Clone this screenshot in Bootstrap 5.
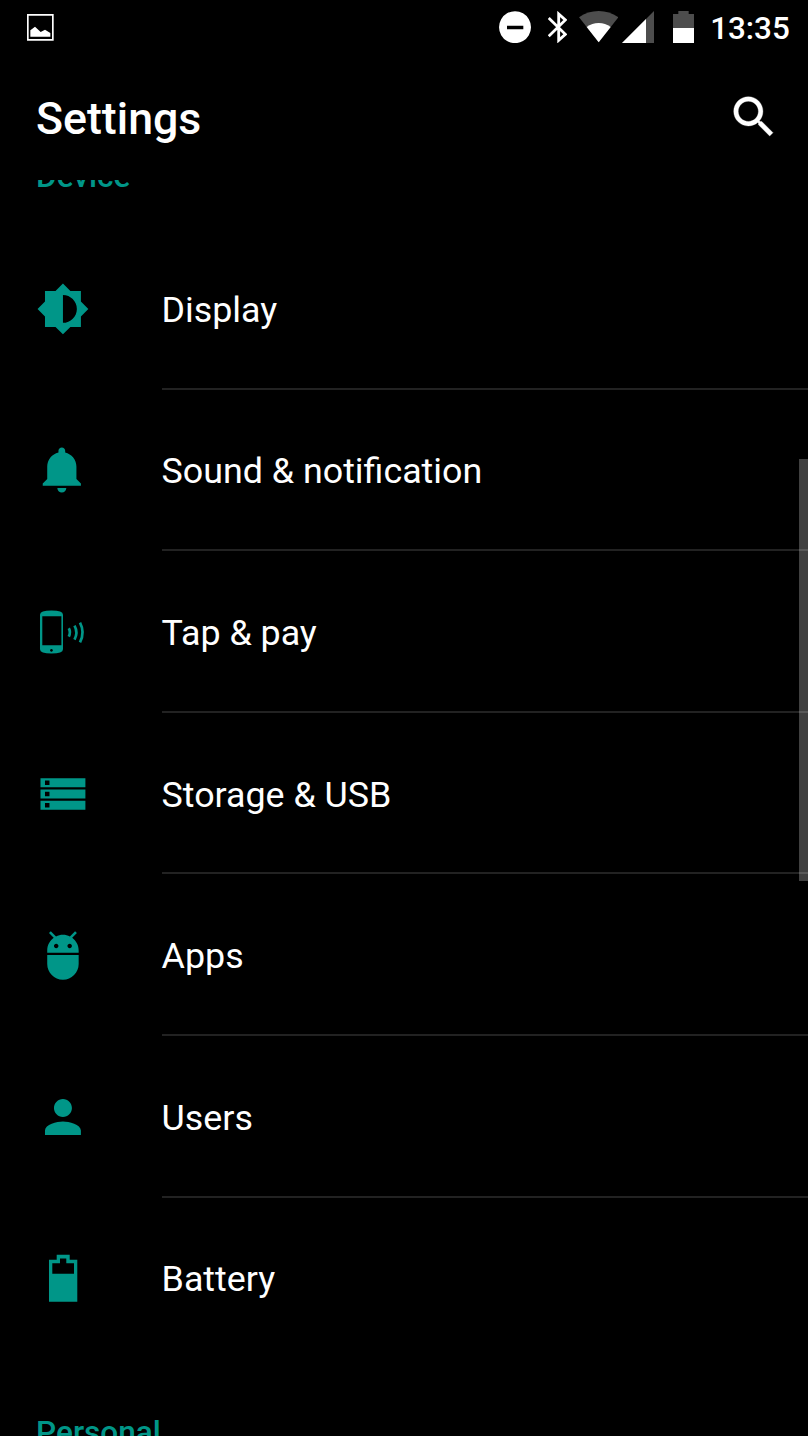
<!DOCTYPE html>
<html lang="en">
<head>
<meta charset="utf-8">
<meta name="viewport" content="width=device-width, initial-scale=1">
<title>Settings</title>
<link href="https://cdn.jsdelivr.net/npm/bootstrap@5.3.0/dist/css/bootstrap.min.css" rel="stylesheet">
<style>
  body { background: #000; color: #fff; font-family: Roboto, "Noto Sans", sans-serif; }
  svg { display: block; flex: none; }
  .screen { height: 1436px; width: 808px; }
  .status-bar { flex: none; height: 54px; padding: 0 18.2px 0 27px; }
  .icon-bluetooth { margin-left: 17px; }
  .icon-wifi { margin-left: 11.3px; }
  .icon-signal { margin-left: 3.7px; }
  .icon-battery { margin-left: 19.3px; }
  .clock { font-size: 31.4px; font-weight: 500; line-height: 54px; margin-left: 16.2px; padding-top: 3px; }
  .app-bar { flex: none; height: 125.6px; padding: 0 26.8px 0 36px; }
  .app-title { font-size: 44.7px; font-weight: 500; line-height: 54px; margin-top: 5px; }
  .section-title { color: #009688; font-size: 31.6px; font-weight: 500; line-height: 37px; padding-left: 36px; }
  .section-device { height: 70.4px; margin-top: -22px; }
  .section-personal { padding-top: 54.6px; }
  .setting { height: 161.6px; padding-left: 36px; }
  .setting svg { width: 53.9px; height: 53.9px; margin-right: 71.7px; fill: #009688; }
  .setting-label { font-size: 35.8px; line-height: 42px; height: 161.6px; padding-top: 4px; border-bottom: 2px solid #222; }
  .setting:last-child .setting-label { border-bottom-color: transparent; }
  .scroll-thumb { right: 0; top: 279.4px; width: 9px; height: 422px; background: rgba(255,255,255,.25); }
</style>
</head>
<body>
<div class="screen d-flex flex-column overflow-hidden">
  <header class="status-bar d-flex align-items-center">
    <svg class="me-auto" width="26.7" height="27" viewBox="81 41 80 81"><path d="M83.5 43.5h75v75h-75z" fill="none" stroke="#fff" stroke-width="5"/><path d="M91 109V90l14-11 17 16 13-7 16 10v11z" fill="#fff"/></svg>
    <svg width="32" height="32.3" viewBox="33 33 96 97"><path fill="#fff" fill-rule="evenodd" d="M81 33.500a48 48 0 1 0 .1 0zM57 77h49v11H57z"/></svg>
    <svg class="icon-bluetooth" width="19.4" height="32.3" viewBox="180 33 58 97"><path d="M182 54l50 49-20 18V42l20 18-50 49" fill="none" stroke="#fff" stroke-width="8.500"/></svg>
    <svg class="icon-wifi" width="39.4" height="32.3" viewBox="272 33 118 97"><path fill="#4d4d4d" d="M272 52Q298 33 331 33T390 52L331 127z"/><path fill="#fff" d="M295 81Q311 69 331 69T367 81L331 127z"/></svg>
    <svg class="icon-signal" width="32" height="32.3" viewBox="401 33 96 97"><path fill="#4d4d4d" d="M497 33v96H401z"/><path fill="#fff" d="M473 57v72H401z"/></svg>
    <svg class="icon-battery" width="21" height="32.3" viewBox="555 33 63 97"><path fill="#4d4d4d" d="M555 84V42h16v-9h31v9h16v42z"/><path fill="#fff" d="M555 84h63v46h-63z"/></svg>
    <span class="clock">13:35</span>
  </header>
  <nav class="app-bar d-flex align-items-center justify-content-between">
    <h1 class="app-title mb-0">Settings</h1>
    <svg width="53.9" height="53.9" viewBox="0 0 24 24" fill="#fff" stroke="#fff" stroke-width=".15"><path d="M15.500 14h-.79l-.28-.27C15.410 12.590 16 11.110 16 9.500 16 5.910 13.090 3 9.500 3S3 5.910 3 9.500 5.910 16 9.500 16c1.610 0 3.090-.59 4.230-1.570l.27.28v.79l5 4.990L20.490 19l-4.990-5zm-6 0C7.010 14 5 11.990 5 9.500S7.010 5 9.500 5 14 7.010 14 9.500 11.990 14 9.500 14z"/></svg>
  </nav>
  <main class="flex-fill overflow-hidden position-relative">
    <div class="section-title section-device">Device</div>
    <div>
      <div class="setting d-flex align-items-center">
        <svg viewBox="0 0 24 24"><path d="M20 15.310L23.310 12 20 8.690V4h-4.690L12 .69 8.690 4H4v4.690L.69 12 4 15.310V20h4.690L12 23.310 15.310 20H20v-4.690zM12 18.200V5.800c3.400 0 6.200 2.780 6.200 6.200s-2.800 6.200-6.200 6.200z"/></svg>
        <div class="setting-label flex-fill d-flex align-items-center">Display</div>
      </div>
      <div class="setting d-flex align-items-center">
        <svg viewBox="0 0 24 24"><path d="M11.500 22c1.100 0 2-.9 2-2h-4c0 1.100.9 2 2 2zm6.500-6v-5.500c0-3.070-2.130-5.640-5-6.320V3.500c0-.83-.67-1.500-1.500-1.500S10 2.670 10 3.500v.68c-2.870.68-5 3.250-5 6.320V16l-2 2v1h17v-1l-2-2z"/></svg>
        <div class="setting-label flex-fill d-flex align-items-center">Sound &amp; notification</div>
      </div>
      <div class="setting d-flex align-items-center">
        <svg viewBox="36 604.750 53.900 53.900"><path fill-rule="evenodd" d="M40 614.500Q40 610.300 51.500 610.300T63 614.500V649Q63 653.300 51.500 653.300T40 649zM42.300 616v29h19.100v-29zM51.400 648.700a1.400 1.400 0 1 0 .1 0z"/><path d="M68.800 628q2.200 4 0 8.300M74.500 625.300q3.800 6.800 0 14M80 622.300q5.200 9.800 0 19.800" fill="none" stroke="#009688" stroke-width="2.700"/></svg>
        <div class="setting-label flex-fill d-flex align-items-center">Tap &amp; pay</div>
      </div>
      <div class="setting d-flex align-items-center">
        <svg viewBox="0 0 24 24"><path fill-rule="evenodd" d="M2 5h20v4H2zM4 6v2h2V6zM2 10h20v4H2zM4 11v2h2v-2zM2 15h20v4H2zM4 16v2h2v-2z"/></svg>
        <div class="setting-label flex-fill d-flex align-items-center">Storage &amp; USB</div>
      </div>
      <div class="setting d-flex align-items-center">
        <svg viewBox="0 0 24 24"><path d="M5 16c0 3.870 3.130 7 7 7s7-3.130 7-7v-4H5v4zM16.120 4.370l2.100-2.100-.82-.83-2.300 2.310C14.160 3.280 13.120 3 12 3s-2.160.28-3.090.75L6.600 1.440l-.82.83 2.100 2.100C6.140 5.640 5 7.680 5 10v1h14v-1c0-2.320-1.140-4.360-2.880-5.630zM9 9c-.55 0-1-.45-1-1s.45-1 1-1 1 .45 1 1-.45 1-1 1zm6 0c-.55 0-1-.45-1-1s.45-1 1-1 1 .45 1 1-.45 1-1 1z"/></svg>
        <div class="setting-label flex-fill d-flex align-items-center">Apps</div>
      </div>
      <div class="setting d-flex align-items-center">
        <svg viewBox="0 0 24 24"><path d="M12 12c2.210 0 4-1.790 4-4s-1.790-4-4-4-4 1.790-4 4 1.790 4 4 4zm0 2c-2.670 0-8 1.340-8 4v2h16v-2c0-2.660-5.330-4-8-4z"/></svg>
        <div class="setting-label flex-fill d-flex align-items-center">Users</div>
      </div>
      <div class="setting d-flex align-items-center">
        <svg viewBox="36 1251.150 53.900 53.900"><path fill-rule="evenodd" d="M49 1260h7.700v-5h13v5h7.600v42H49zM52.300 1263.300V1274H74v-10.700h-7.700v-4.600H60v4.600z"/></svg>
        <div class="setting-label flex-fill d-flex align-items-center">Battery</div>
      </div>
    </div>
    <div class="section-title section-personal">Personal</div>
    <div class="scroll-thumb position-absolute"></div>
  </main>
</div>
<script src="https://cdn.jsdelivr.net/npm/bootstrap@5.3.0/dist/js/bootstrap.bundle.min.js"></script>
</body>
</html>
